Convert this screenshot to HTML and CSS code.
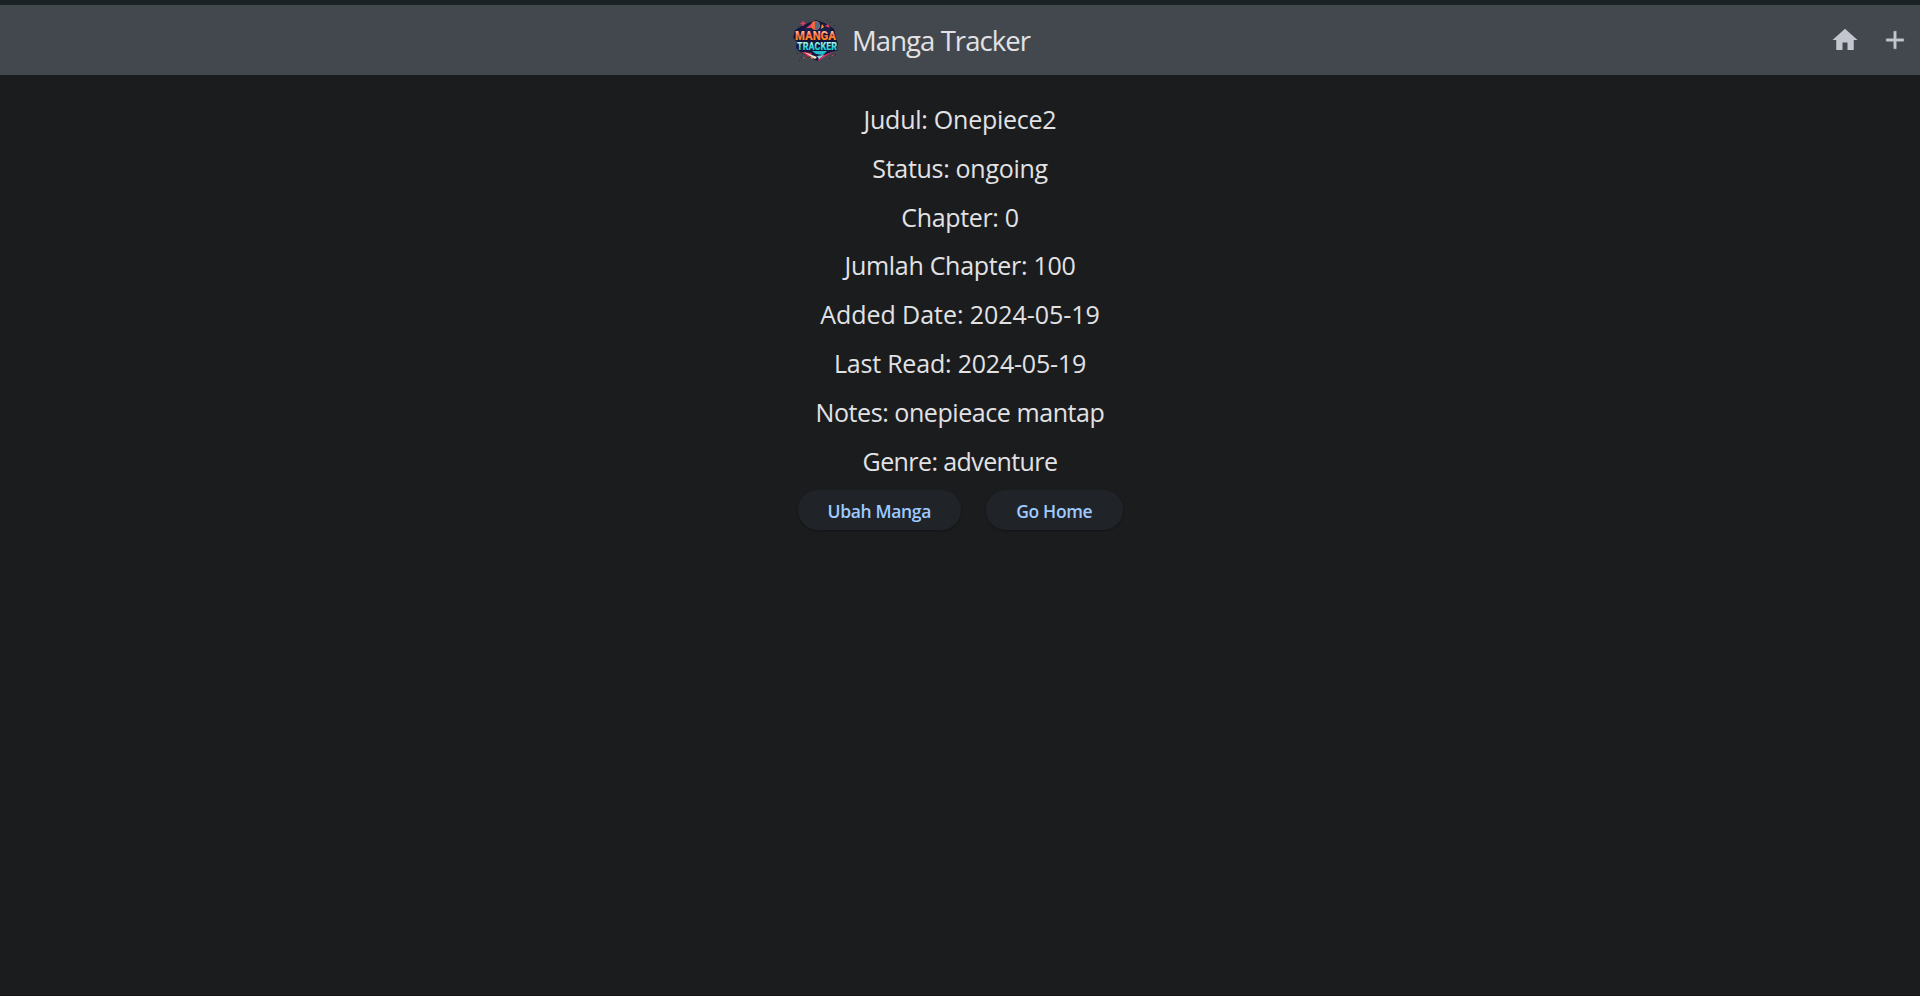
FILE: index.html
```html
<!DOCTYPE html>
<html lang="id">
<head>
<meta charset="utf-8">
<title>Manga Tracker</title>
<link rel="stylesheet" href="styles.css">
</head>
<body>
<header class="app-bar">
  <div class="brand">
    <svg class="logo" width="48" height="44" viewBox="0 0 48 44">
      <path d="M8 9 16 5 24 2 33 5 42 11 44 20 46 26 43 33 34 37 25 43 17 39 8 34 4 30 5 22 1 20 3 12Z" fill="#15173d"/>
      <path d="M13 10 19 6 24 9 32 6 38 10 41 18 8 19Z" fill="#19204b"/>
      <path d="M14 10 19 6 21 10ZM33 8 36 6 38 10Z" fill="#e83d5e"/>
      <circle cx="23.500" cy="7.500" r="4.500" fill="#ee6b42"/>
      <path d="M23 3A4.500 4.500 0 0 1 23 12Z" fill="#526b83"/>
      <path d="M30 6 32 9 29 11Z" fill="#ff9d24"/>
      <path d="M9 34 20 35 17 39Z" fill="#df3158"/>
      <path d="M27 39 42 33 34 38 26 43Z" fill="#d82f65"/>
      <path d="M20 33 35 33 31 37 24 36Z" fill="#23bdca"/>
      <path d="M12 34 25 39 23 41Z" fill="#f1e8da"/>
      <path d="M25 38 32 37 27 41Z" fill="#7bdae5"/>
      <path d="M17 38 22 40 20 41Z" fill="#ff8c35"/>
      <path d="M11 3v5M8.500 5.500h5" stroke="#e13f68" stroke-width="1.300"/>
      <path d="M6 8h1v1H6zM38 4h1v1h-1zM42 7h1v1h-1zM5 35h1v1H5zM9 39h1v1h-1zM37 40h1v1h-1zM43 36h1v1h-1zM35 2h1v1h-1zM7 42h1v1H7z" fill="#20264f"/>
      <path d="M11 39h1.500v1.500H11zM40 37h1v1h-1z" fill="#e13f68"/>
      <text class="logo-manga" x="3" y="21.500" textLength="41" lengthAdjust="spacingAndGlyphs">MANGA</text>
      <text class="logo-tracker" x="5" y="31.800" textLength="40" lengthAdjust="spacingAndGlyphs">TRACKER</text>
      <defs>
        <linearGradient id="warm" x1="0" y1="0" x2="0" y2="1"><stop offset=".25" stop-color="#ffc59a"/><stop offset=".5" stop-color="#ff6b45"/><stop offset=".8" stop-color="#ff8a18"/></linearGradient>
        <linearGradient id="cool" x1="0" y1="0" x2="0" y2="1"><stop offset=".3" stop-color="#a0f4ed"/><stop offset=".65" stop-color="#24ced3"/></linearGradient>
      </defs>
    </svg>
    <h1 class="title">Manga Tracker</h1>
  </div>
  <nav class="actions">
    <svg class="icon" viewBox="0 0 24 24"><path d="M10 20v-6h4v6h5v-8h3L12 3 2 12h3v8z"/></svg>
    <svg class="icon add" viewBox="0 0 24 24"><path d="M19 13h-6v6h-2v-6H5v-2h6V5h2v6h6v2z"/></svg>
  </nav>
</header>
<main class="details">
  <p class="row judul">Judul: Onepiece2</p>
  <p class="row status">Status: ongoing</p>
  <p class="row chapter">Chapter: 0</p>
  <p class="row total">Jumlah Chapter: 100</p>
  <p class="row added">Added Date: 2024-05-19</p>
  <p class="row last">Last Read: 2024-05-19</p>
  <p class="row notes">Notes: onepieace mantap</p>
  <p class="row genre">Genre: adventure</p>
  <div class="buttons">
    <button class="button edit">Ubah Manga</button>
    <button class="button home">Go Home</button>
  </div>
</main>
</body>
</html>
```
FILE: styles.css
```css
* { box-sizing: border-box; }
body {
  margin: 0;
  height: 996px;
  background: #1b1c1e;
  border-top: 5px solid #1b2226;
  border-bottom: 1px solid #151416;
  font-family: "Open Sans", "Noto Sans", sans-serif;
  color: #e2e2e5;
}
.app-bar {
  height: 70px;
  background: #43474e;
  display: flex;
  align-items: center;
  justify-content: space-between;
  padding: 0 10px 0 792px;
}
.brand { display: flex; align-items: center; gap: 12px; }
.logo { display: block; overflow: visible; }
.logo-manga, .logo-tracker {
  font-family: Roboto, sans-serif;
  font-weight: 900;
  stroke: #11163c;
  stroke-width: 1.4px;
  paint-order: stroke;
}
.logo-manga { font-size: 13px; fill: url(#warm); }
.logo-tracker { font-size: 11.5px; fill: url(#cool); }
.title {
  margin: 0;
  font-size: 27.5px;
  font-weight: 400;
  line-height: 35px;
  letter-spacing: -0.93px;
  white-space: nowrap;
}
.actions { display: flex; gap: 20px; }
.icon { width: 30px; height: 30px; fill: #c3c6cf; }
.add { stroke: #c3c6cf; stroke-width: 0.3px; }
.details {
  display: flex;
  flex-direction: column;
  align-items: center;
  padding-top: 20px;
}
.row {
  margin: 0;
  height: 48.8px;
  line-height: 48px;
  font-size: 25px;
  white-space: nowrap;
}
.judul { letter-spacing: -0.25px; }
.status { letter-spacing: -0.3px; }
.chapter { letter-spacing: -0.35px; }
.total { letter-spacing: -0.3px; }
.added { letter-spacing: -0.05px; }
.last { letter-spacing: -0.2px; }
.notes { letter-spacing: -0.43px; }
.genre { letter-spacing: -0.6px; }
.buttons { display: flex; gap: 25px; padding-top: 5px; }
.button {
  height: 39.5px;
  border: 0;
  border-radius: 20px;
  padding: 1px 0 0;
  background: #202429;
  box-shadow: 0 1px 2px rgba(0, 0, 0, .3);
  color: #9ecaff;
  font: 600 17.5px/24px "Open Sans", "Noto Sans", sans-serif;
  letter-spacing: -0.35px;
  white-space: nowrap;
}
.edit { width: 163.5px; }
.home { width: 136.5px; }
```
